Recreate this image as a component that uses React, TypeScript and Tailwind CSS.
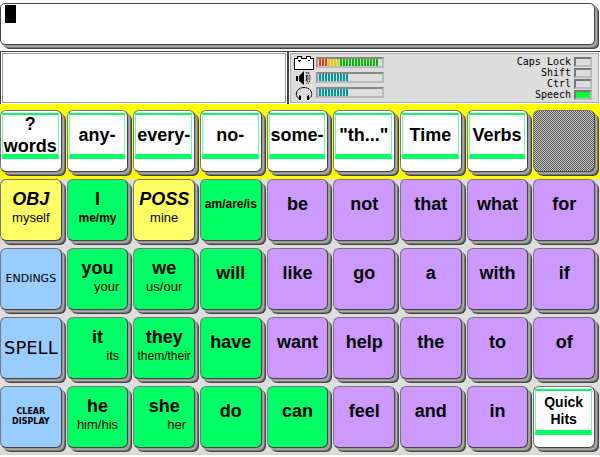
import React from "react";

type Tone = "menu" | "yellow" | "green" | "blue" | "purple" | "off";
type KeyDef = {
  t: string;
  tone: Tone;
  sub?: string;
  size?: string;
  top?: string;
  subStyle?: string;
  tall?: boolean;
};

const tones: Record<Tone, string> = {
  menu: "bg-white",
  yellow: "bg-[#ffff66]",
  green: "bg-[#00ff66]",
  blue: "bg-[#99ccff]",
  purple: "bg-[#cc99ff]",
  off: "bg-[#aaaaaa]",
};

const small = "text-center text-[13px]";
const smallRight = "text-right pr-2 text-[13px]";
const p = (t: string): KeyDef => ({ t, tone: "purple" });

const menuRow: KeyDef[] = [
  { t: "? words", tone: "menu", tall: true },
  { t: "any-", tone: "menu" },
  { t: "every-", tone: "menu" },
  { t: "no-", tone: "menu" },
  { t: "some-", tone: "menu" },
  { t: '"th..."', tone: "menu" },
  { t: "Time", tone: "menu" },
  { t: "Verbs", tone: "menu" },
  { t: "", tone: "off" },
];

const keys: KeyDef[] = [
  { t: "OBJ", tone: "yellow", sub: "myself", size: "text-[18px] italic font-bold", subStyle: small },
  { t: "I", tone: "green", sub: "me/my", subStyle: "text-center text-[12px] font-bold" },
  { t: "POSS", tone: "yellow", sub: "mine", size: "text-[18px] italic font-bold", subStyle: small },
  { t: "am/are/is", tone: "green", size: "text-[12px] font-bold" },
  p("be"), p("not"), p("that"), p("what"), p("for"),
  { t: "ENDINGS", tone: "blue", size: "text-[11px] font-['DejaVu_Sans']", top: "pt-5" },
  { t: "you", tone: "green", sub: "your", subStyle: smallRight },
  { t: "we", tone: "green", sub: "us/our", subStyle: small },
  { t: "will", tone: "green" },
  p("like"), p("go"), p("a"), p("with"), p("if"),
  { t: "SPELL", tone: "blue", size: "text-[18px] font-['DejaVu_Sans']", top: "pt-5" },
  { t: "it", tone: "green", sub: "its", subStyle: smallRight },
  { t: "they", tone: "green", sub: "them/their", subStyle: "text-center text-[12px]" },
  { t: "have", tone: "green" },
  p("want"), p("help"), p("the"), p("to"), p("of"),
  { t: "CLEAR DISPLAY", tone: "blue", size: "px-2 text-[8px] leading-[10px] font-bold font-['DejaVu_Sans']", top: "pt-5" },
  { t: "he", tone: "green", sub: "him/his", subStyle: small },
  { t: "she", tone: "green", sub: "her", subStyle: smallRight },
  { t: "do", tone: "green" },
  { t: "can", tone: "green" },
  p("feel"), p("and"), p("in"),
  { t: "Quick Hits", tone: "menu", size: "text-[14px] leading-[17px] font-bold" },
];

const bevel =
  "shadow-[1px_1px_0_#999,2px_2px_0_#aaa,3px_3px_0_#777,4px_4px_0_#444]";

function Key({ k }: { k: KeyDef }) {
  const base = `mr-[5px] h-[62px] min-w-0 rounded-[6px] border border-[#777] border-r-[#444] border-b-[#444] text-black ${bevel} ${tones[k.tone]}`;
  if (k.tone === "off") {
    return (
      <button
        type="button"
        disabled
        aria-label="Unused key"
        className={`${base} bg-[repeating-conic-gradient(#555_0_25%,#ccc_0_50%)] bg-size-[2px_2px]`}
      />
    );
  }
  if (k.tone === "menu") {
    return (
      <button type="button" className={`${base} pt-[2px] pr-[2px] pb-3 pl-px`}>
        <span
          className={`flex h-full items-center justify-center border-x border-t-2 border-b-[5px] border-x-[#66ff99] border-y-[#00ff66] text-center ${
            k.size ?? (k.tall ? "text-[18px] leading-[22px] font-bold" : "text-[18px] leading-5 font-bold")
          }`}
        >
          {k.t}
        </span>
      </button>
    );
  }
  const top = k.top ?? (k.sub ? "pt-[9px]" : "pt-[14px]");
  return (
    <button type="button" className={`${base} ${top} flex flex-col`}>
      <span className={`w-full text-center leading-5 ${k.size ?? "text-[18px] font-bold"}`}>{k.t}</span>
      {k.sub && <span className={`w-full leading-[18px] ${k.subStyle}`}>{k.sub}</span>}
    </button>
  );
}

function Meter({ label, colors }: { label: string; colors: string[] }) {
  return (
    <div
      role="meter"
      aria-label={label}
      aria-valuemin={0}
      aria-valuemax={20}
      aria-valuenow={colors.length}
      className="flex h-[11px] w-[68px] gap-px border-2 border-[#bbb] border-t-[#888] border-l-[#999] bg-[#ddd] pl-px"
    >
      {colors.map((c, i) => (
        <span key={i} className={`w-[2px] ${c}`} />
      ))}
    </div>
  );
}

const battery = Array.from({ length: 20 }, (_, i) =>
  i < 3 ? "bg-[#ff3311]" : i < 7 ? "bg-[#eecc00]" : "bg-[#00bb00]"
);
const teal = Array.from({ length: 10 }, () => "bg-[#009999]");

function Flag({ label, on }: { label: string; on?: boolean }) {
  return (
    <label className="flex h-[11px] items-center justify-end gap-[3px]">
      {label}
      <input
        type="checkbox"
        defaultChecked={on}
        className="h-[10px] w-[18px] appearance-none border-2 border-[#bbb] border-t-[#777] border-l-[#777] bg-[#ddd] checked:bg-[#00ff33]"
      />
    </label>
  );
}

export default function App() {
  return (
    <main className="min-h-screen bg-white font-['Liberation_Sans',Arial,sans-serif]">
      <div className="relative pt-[3px] pr-[5px] pb-[6px]">
        <textarea
          aria-label="Message"
          className={`block h-[42px] w-full resize-none rounded-[5px] border border-[#444] bg-white px-5 outline-none ${bevel}`}
        />
        <span className="absolute top-[5px] left-[5px] h-[18px] w-[11px] bg-black" />
      </div>

      <div className="grid h-[53px] grid-cols-[287fr_313fr]">
        <div className="border-t border-l border-[#444] bg-white p-px">
          <div className="h-full border border-[#999]" />
        </div>
        <div className="border-t border-l-2 border-[#444] bg-white p-px">
          <div className="flex h-full justify-between border border-[#aaa] bg-[#ddd] pr-[6px] pl-[3px]">
            <div className="grid grid-cols-[20px_68px] grid-rows-[15px_15px_15px] items-center gap-x-[2px] pt-px">
              <svg viewBox="0 0 20 14" className="h-[14px] w-5" shapeRendering="crispEdges">
                <path d="M0.5 2.5h19v11h-19z" fill="#fff" stroke="#000" />
                <path d="M3.5 2.5v-2h4v2M12.500 2.500v-2h4v2" fill="#fff" stroke="#000" />
                <path d="M4 4.500h3M14 4.500h2M5.500 4v2" stroke="#000" fill="none" />
              </svg>
              <Meter label="Battery" colors={battery} />
              <svg viewBox="0 0 20 14" className="h-[14px] w-5">
                <path d="M2 5h2v5H2zM5 5l5-5v14l-5-4z" fill="#000" />
                <path d="M12 4q2 3 0 6" fill="none" stroke="#000" />
                <path d="M12 1q4 6 0 12M14 1q4 6 0 12" fill="none" stroke="#000" strokeDasharray="2 1" />
              </svg>
              <Meter label="Volume" colors={teal} />
              <svg viewBox="0 0 20 14" className="h-[14px] w-5">
                <path d="M5 12.500C0 10 2 1.500 10 1.500S20 10 15 12.500" fill="none" stroke="#000" strokeDasharray="4 0.500" />
                <path d="M5 9l2 1v4H5zM15 9l-2 1v4h2z" fill="#000" />
              </svg>
              <Meter label="Headphones" colors={teal} />
            </div>
            <div className="flex flex-col pt-[2px] font-['DejaVu_Sans_Mono',monospace] text-[10px] leading-[11px]">
              <Flag label="Caps Lock" />
              <Flag label="Shift" />
              <Flag label="Ctrl" />
              <Flag label="Speech" on />
            </div>
          </div>
        </div>
      </div>

      <div className="grid h-[75px] grid-cols-9 bg-[#ffff00] pt-[6px]">
        {menuRow.map((k, i) => (
          <Key key={i} k={k} />
        ))}
      </div>
      <div className="grid grid-cols-9 gap-y-[7px] border-b-2 border-[#d8d8cc] bg-[#ddd] pb-[5px]">
        {keys.map((k) => (
          <Key key={k.t} k={k} />
        ))}
      </div>
    </main>
  );
}
